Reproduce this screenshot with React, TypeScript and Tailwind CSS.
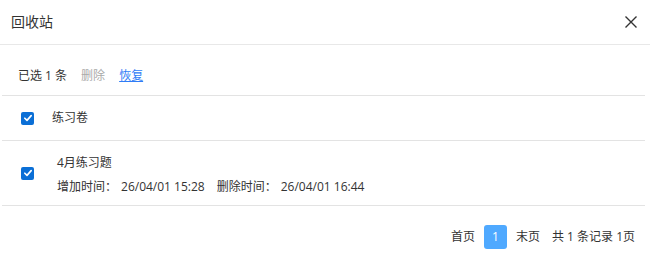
import { useState } from 'react'

const font = { fontFamily: '"Open Sans", "Noto Sans CJK SC", sans-serif' }

function Check({ checked, onChange }: { checked: boolean; onChange: () => void }) {
  return (
    <button
      onClick={onChange}
      className={`w-[13px] h-[13px] rounded-[2px] flex items-center justify-center shrink-0 ${checked ? 'bg-[#0b6fd6]' : 'border border-[#767676] bg-white'}`}
    >
      {checked && (
        <svg viewBox="0 0 12 12" className="w-[10px] h-[10px]">
          <path d="M2.2 6.3 L4.8 8.8 L9.8 3.2" fill="none" stroke="white" strokeWidth="2" strokeLinecap="round" strokeLinejoin="round" />
        </svg>
      )}
    </button>
  )
}

export default function App() {
  const [folder, setFolder] = useState(true)
  const [item, setItem] = useState(true)

  return (
    <div className="w-[650px] h-[263px] bg-white text-[#333] text-[12px] leading-[18px]" style={font}>
      {/* Header */}
      <div className="h-[45px] flex items-center justify-between pl-[11px] pr-[12px] border-b border-[#e8e8e8]">
        <h1 className="text-[14px] text-[#333]">回收站</h1>
        <button className="text-[#333]">
          <svg viewBox="0 0 14 14" className="w-[14px] h-[14px]">
            <path d="M1.5 1.5 L12.5 12.5 M12.5 1.5 L1.5 12.5" stroke="currentColor" strokeWidth="1.4" />
          </svg>
        </button>
      </div>

      {/* Toolbar */}
      <div className="h-[50px] flex items-center gap-[14px] pl-[18px] pt-[12px]">
        <span>已选 1 条</span>
        <span className="text-[#aaa]">删除</span>
        <a href="#" className="text-[#2f7cf6] underline">恢复</a>
      </div>

      {/* List */}
      <div className="ml-[2px] mr-[5px] border-t border-[#e3e3e3]">
        <div className="h-[45px] flex items-center border-b border-[#e3e3e3] pl-[19px]">
          <Check checked={folder} onChange={() => setFolder(!folder)} />
          <span className="ml-[18px]">练习卷</span>
        </div>
        <div className="h-[65px] flex items-center border-b border-[#e3e3e3] pl-[19px]">
          <Check checked={item} onChange={() => setItem(!item)} />
          <div className="ml-[23px] flex flex-col gap-[6px] pt-[3px]">
            <span>4月练习题</span>
            <div className="flex">
              <span>增加时间：</span>
              <span className="ml-[4px]">26/04/01 15:28</span>
              <span className="ml-[12px]">删除时间：</span>
              <span className="ml-[4px]">26/04/01 16:44</span>
            </div>
          </div>
        </div>
      </div>

      {/* Pagination */}
      <div className="flex items-center justify-end gap-[9px] pr-[15px] pt-[19px]">
        <span>首页</span>
        <span className="w-[23px] h-[24px] rounded-[3px] bg-[#4fa9ff] text-white flex items-center justify-center">1</span>
        <span>末页</span>
        <span className="ml-[3px]">共 1 条记录 1页</span>
      </div>
    </div>
  )
}
